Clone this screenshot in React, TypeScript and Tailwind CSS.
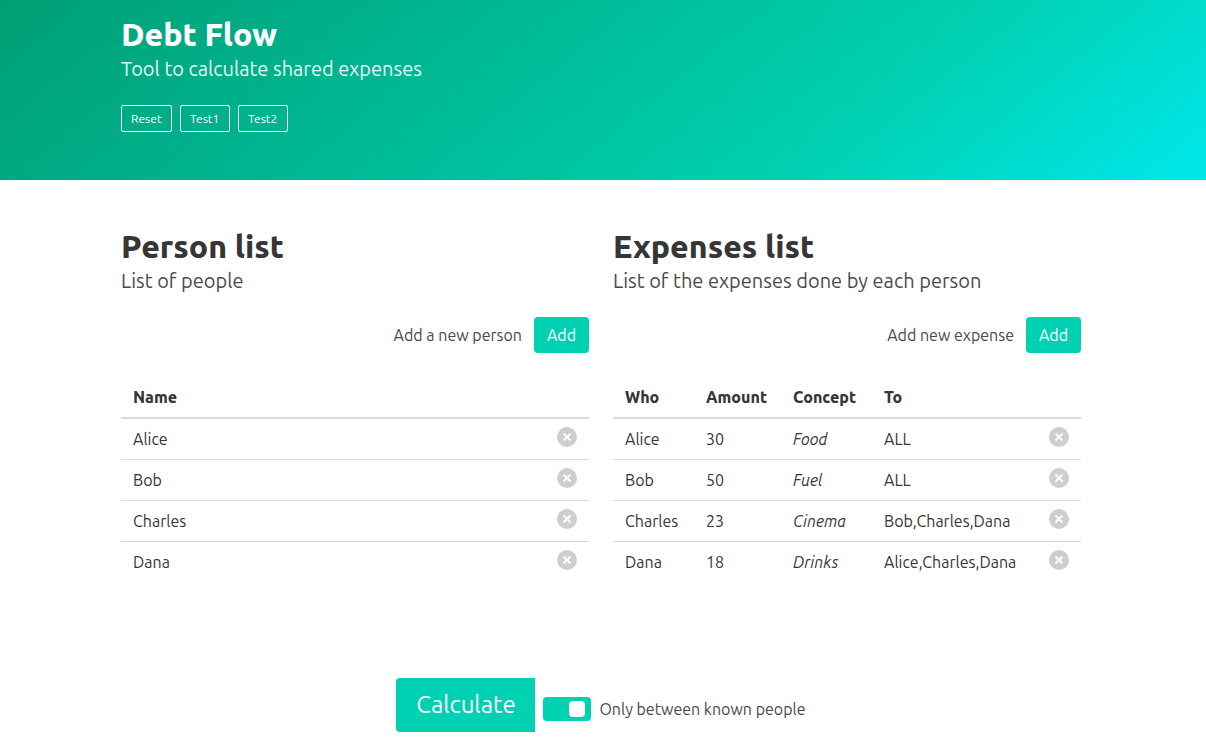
import { useState } from "react";

type Expense = { who: string; amount: number; concept: string; to: string };

const initialPeople = ["Alice", "Bob", "Charles", "Dana"];

const initialExpenses: Expense[] = [
  { who: "Alice", amount: 30, concept: "Food", to: "ALL" },
  { who: "Bob", amount: 50, concept: "Fuel", to: "ALL" },
  { who: "Charles", amount: 23, concept: "Cinema", to: "Bob,Charles,Dana" },
  { who: "Dana", amount: 18, concept: "Drinks", to: "Alice,Charles,Dana" },
];

function OutlineButton({ label, onClick }: { label: string; onClick?: () => void }) {
  return (
    <button
      type="button"
      onClick={onClick}
      className="h-[27px] min-w-[50px] cursor-pointer rounded-xs border border-white px-[9px] text-xs text-white"
    >
      {label}
    </button>
  );
}

function DeleteButton({ label, onClick }: { label: string; onClick: () => void }) {
  return (
    <button type="button" aria-label={label} onClick={onClick} className="block size-5 cursor-pointer">
      <svg viewBox="0 0 20 20" className="size-5" aria-hidden="true">
        <circle cx="10" cy="10" r="10" fill="#cecece" />
        <path d="M6.5 6.5l7 7M13.5 6.5l-7 7" stroke="#fff" strokeWidth="2" />
      </svg>
    </button>
  );
}

function SectionHeading({ title, subtitle }: { title: string; subtitle: string }) {
  return (
    <div>
      <h2 className="text-[32px] leading-9 font-extrabold text-[#363636]">{title}</h2>
      <p className="mt-1 text-xl leading-[25px]">{subtitle}</p>
    </div>
  );
}

function AddRow({ id, label }: { id: string; label: string }) {
  return (
    <div className="mt-6 flex items-center justify-end gap-3">
      <span id={id}>{label}</span>
      <button
        type="button"
        aria-describedby={id}
        className="h-9 w-[55px] cursor-pointer rounded-sm bg-[#00d1b2] text-white"
      >
        Add
      </button>
    </div>
  );
}

const headCell = "h-[41px] border-b-2 border-[#dbdbdb] px-3 text-left font-extrabold";
const bodyCell = "px-3 py-2";
const bodyRow = "h-[41px] border-b border-[#dbdbdb] last:border-b-0";

export default function App() {
  const [people, setPeople] = useState(initialPeople);
  const [expenses, setExpenses] = useState(initialExpenses);
  const [known, setKnown] = useState(true);

  const restore = () => {
    setPeople(initialPeople);
    setExpenses(initialExpenses);
  };

  return (
    <div className="bg-white font-[Ubuntu,'Noto_Sans',sans-serif] text-base leading-6 font-normal text-[#4a4a4a]">
      <header className="bg-[linear-gradient(141deg,#009e74_0%,#00d1b2_71%,#00e7eb_100%)] pt-4 pr-1 pb-12">
        <div className="mx-auto max-w-[960px]">
          <h1 className="text-[32px] leading-9 font-extrabold text-white">Debt Flow</h1>
          <p className="mt-1 text-xl leading-[25px] text-white/90">Tool to calculate shared expenses</p>
          <div className="mt-6 flex gap-2">
            <OutlineButton
              label="Reset"
              onClick={() => {
                setPeople([]);
                setExpenses([]);
              }}
            />
            <OutlineButton label="Test1" onClick={restore} />
            <OutlineButton label="Test2" onClick={restore} />
          </div>
        </div>
      </header>

      <main className="pt-12 pr-1 pb-4">
        <div className="mx-auto grid max-w-[960px] grid-cols-2 gap-6">
          <section>
            <SectionHeading title="Person list" subtitle="List of people" />
            <AddRow id="add-person" label="Add a new person" />
            <table className="mt-6 w-full border-collapse text-[#363636]">
              <thead>
                <tr>
                  <th className={headCell}>Name</th>
                  <th className={headCell} />
                </tr>
              </thead>
              <tbody>
                {people.map((name) => (
                  <tr key={name} className={bodyRow}>
                    <td className={bodyCell}>{name}</td>
                    <td className="w-11 px-3 pt-2 align-top">
                      <DeleteButton
                        label={`Remove ${name}`}
                        onClick={() => setPeople(people.filter((p) => p !== name))}
                      />
                    </td>
                  </tr>
                ))}
              </tbody>
            </table>
          </section>

          <section>
            <SectionHeading title="Expenses list" subtitle="List of the expenses done by each person" />
            <AddRow id="add-expense" label="Add new expense" />
            <table className="mt-6 w-full table-fixed border-collapse text-[#363636]">
              <colgroup>
                <col className="w-[81px]" />
                <col className="w-[87px]" />
                <col className="w-[91px]" />
                <col />
                <col className="w-11" />
              </colgroup>
              <thead>
                <tr>
                  <th className={headCell}>Who</th>
                  <th className={headCell}>Amount</th>
                  <th className={headCell}>Concept</th>
                  <th className={headCell}>To</th>
                  <th className={headCell} />
                </tr>
              </thead>
              <tbody>
                {expenses.map((e) => (
                  <tr key={e.who} className={bodyRow}>
                    <td className={bodyCell}>{e.who}</td>
                    <td className={bodyCell}>{e.amount}</td>
                    <td className={bodyCell}>
                      <em>{e.concept}</em>
                    </td>
                    <td className={bodyCell}>{e.to}</td>
                    <td className="px-3 pt-2 align-top">
                      <DeleteButton
                        label={`Remove ${e.concept}`}
                        onClick={() => setExpenses(expenses.filter((x) => x !== e))}
                      />
                    </td>
                  </tr>
                ))}
              </tbody>
            </table>
          </section>
        </div>

        <div className="mt-[95px] flex items-center justify-center gap-2">
          <button
            type="button"
            className="h-[54px] w-[139px] cursor-pointer rounded-l-sm bg-[#00d1b2] text-2xl text-white"
          >
            Calculate
          </button>
          <label className="flex cursor-pointer items-center gap-2 pt-2">
            <input
              type="checkbox"
              checked={known}
              onChange={(e) => setKnown(e.target.checked)}
              className="peer sr-only"
            />
            <span className="flex h-6 w-12 items-center justify-start rounded-sm bg-[#b5b5b5] px-[6px] peer-checked:justify-end peer-checked:bg-[#00d1b2]">
              <span className="size-4 rounded-sm bg-white" />
            </span>
            <span>Only between known people</span>
          </label>
        </div>
      </main>
    </div>
  );
}
